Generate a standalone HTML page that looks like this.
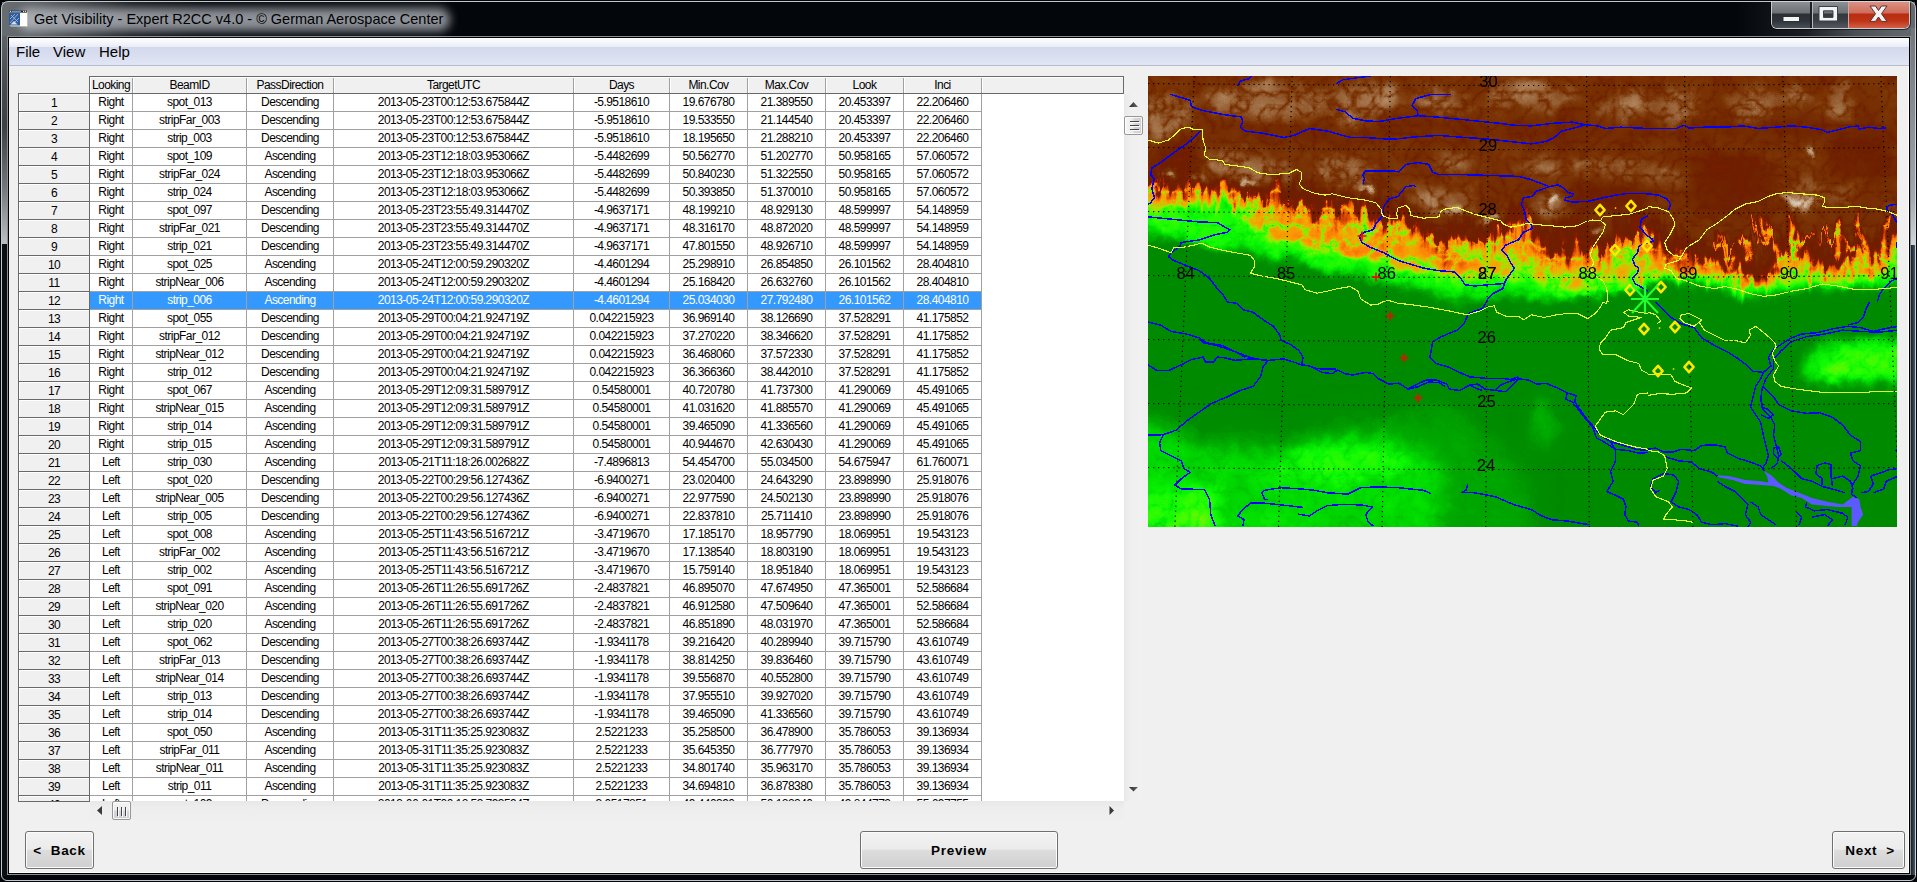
<!DOCTYPE html>
<html lang="en"><head><meta charset="utf-8"><title>Get Visibility - Expert R2CC v4.0</title>
<style>
html,body{margin:0;padding:0;}
body{width:1917px;height:882px;overflow:hidden;background:#000;position:relative;font-family:"Liberation Sans",sans-serif;}
#win{position:absolute;left:0;top:0;width:1917px;height:882px;background:#03070b;overflow:hidden;}
#tbar{position:absolute;left:2px;top:2px;width:260px;height:34px;background:linear-gradient(to right,#686d71 0,#5e6367 30px,#3a3e42 80px,#14181c 130px,rgba(3,7,11,0) 200px);}
#tbarR{position:absolute;left:1735px;top:2px;width:180px;height:34px;background:linear-gradient(to right,rgba(3,7,11,0) 0,#1a1e22 70px,#4a4f54 120px,#5e6368 160px,#6e747a 215px);}
#lf1{position:absolute;left:2px;top:36px;width:5px;height:208px;background:linear-gradient(to bottom,#5e6367 0,#4a4e52 40px,#3c4044 90px,#6f757a 150px,#b8bcbf 205px);}
#lf2{position:absolute;left:2px;top:244px;width:5px;height:632px;background:#0a0f12;}
#rf1{position:absolute;left:1911px;top:28px;width:5px;height:217px;background:linear-gradient(to bottom,#70767c 0,#8c9298 100px,#a2a8ae 170px,#d0d4d8 215px);}
#rf2{position:absolute;left:1911px;top:245px;width:5px;height:630px;background:linear-gradient(to right,#15202a,#566575);}
#edge{position:absolute;left:1px;top:1px;width:1913px;height:878px;border:1px solid rgba(214,219,224,.9);border-radius:7px 7px 6px 6px;}
#inner{position:absolute;left:7px;top:36px;width:1902px;height:837px;border:1px solid #8a8e92;background:#000;}
#inner:after{content:"";position:absolute;left:1px;top:1px;right:1px;bottom:1px;background:#fff;}
#client{position:absolute;left:9px;top:38px;width:1900px;height:835px;background:#f0f0f0;box-shadow:inset -1px -1px 0 #fff;}
#menubar{position:absolute;left:0;top:0;width:1900px;height:28px;background:linear-gradient(to bottom,#ffffff 0px,#f3f5fb 5px,#e8ecf7 9px,#d3d9ec 9px,#d9dfef 18px,#e1e6f6 27px,#b7bdcd 27px,#b7bdcd 28px);}
#menubar span{position:absolute;top:5px;font-size:15px;line-height:18px;color:#000;white-space:nowrap;}
#title{position:absolute;left:34px;top:11px;font-size:14.5px;line-height:17px;color:#000;white-space:nowrap;}
#glow{position:absolute;left:18px;top:8px;width:432px;height:23px;background:rgba(196,200,206,.72);border-radius:11px;filter:blur(5px);}
#appicon{position:absolute;left:9px;top:10px;}
#capbtns{position:absolute;left:1771px;top:1px;width:139px;height:28px;box-sizing:border-box;border:1px solid #c9cdd2;border-top:none;border-radius:0 0 6px 6px;overflow:hidden;background:#222;box-shadow:0 0 0 1px rgba(0,0,0,.6);}
#bmin{position:absolute;left:0;top:0;width:38px;height:27px;background:linear-gradient(to bottom,#8e9398 0,#6c7176 12px,#2b2f34 13px,#30343a 20px,#4a4f56 27px);border-right:1px solid #1c2026;}
#bmax{position:absolute;left:40px;top:0;width:35px;height:27px;background:linear-gradient(to bottom,#8e9398 0,#6c7176 12px,#34383d 13px,#3c4046 20px,#545960 27px);border-left:1px solid #b4b8bc;border-right:1px solid #1c2026;}
#bclose{position:absolute;left:76px;top:0;width:62px;height:27px;background:linear-gradient(to bottom,#dc9488 0,#cf6c5a 12px,#b92c12 13px,#bf3416 20px,#d2604a 27px);border-left:1px solid #d0a8a0;}
#grid{position:absolute;left:18px;top:76px;width:1106px;height:725px;overflow:hidden;font-size:12px;letter-spacing:-0.55px;}
#gwhite{position:absolute;left:72px;top:18px;width:1034px;height:707px;background:#fff;}
#ghead{position:absolute;left:71px;top:0;width:1035px;height:18px;background:#f0f0f0;border:1px solid #696969;box-sizing:border-box;box-shadow:inset 1px 1px 0 #fff;}
.hc{position:absolute;top:1px;height:15px;box-sizing:border-box;border-right:1px solid #a0a0a0;box-shadow:1px 0 0 #fff;text-align:center;line-height:15px;padding-top:0px;white-space:nowrap;}
#gbody{position:absolute;left:0;top:18px;width:1106px;height:707px;overflow:hidden;}
.r{position:absolute;left:0;width:1106px;height:18px;}
.rh{position:absolute;left:0;top:0;width:72px;height:18px;box-sizing:border-box;background:#f0f0f0;border-left:1px solid #696969;border-right:1px solid #696969;border-bottom:1px solid #696969;box-shadow:inset 1px 1px 0 #fff;text-align:center;line-height:18px;}
.c{position:absolute;top:0;height:18px;box-sizing:border-box;border-right:1px solid #a0a0a0;border-bottom:1px solid #a0a0a0;text-align:center;line-height:16px;white-space:nowrap;color:#000;background:#fff;}
.sel .c{background:#3399ff;color:#fff;}
#rhtop{position:absolute;left:18px;top:93px;width:72px;height:1px;background:#696969;}
#rhbot{position:absolute;left:18px;top:801px;width:72px;height:1px;background:#696969;}
#vsb{position:absolute;left:1124px;top:94px;width:19px;height:707px;background:linear-gradient(to right,#e9e9e9,#f0f0f0 40%,#f1f1f1);}
#hsb{position:absolute;left:90px;top:801px;width:1034px;height:19px;background:linear-gradient(to bottom,#e8e8e8,#eeeeee 40%,#efefef);}
.thumb{position:absolute;box-sizing:border-box;border:1px solid #979797;border-radius:2px;box-shadow:inset 0 0 0 1px rgba(255,255,255,.8);}
.thumb i{position:absolute;background:#444;box-shadow:1px 1px 0 rgba(255,255,255,.9);}

.btn{position:absolute;box-sizing:border-box;border:1px solid #707070;border-radius:3px;background:linear-gradient(to bottom,#f2f2f2 0%,#ebebeb 48%,#dddddd 50%,#cfcfcf 100%);box-shadow:inset 0 0 0 1px #fcfcfc;font-weight:bold;font-size:13.5px;letter-spacing:.7px;text-align:center;color:#000;white-space:nowrap;}
#map{position:absolute;left:1148px;top:76px;width:749px;height:451px;overflow:hidden;background:#008800;}

</style></head>
<body>
<div id="win">
<div id="tbar"></div>
<div id="tbarR"></div>
<div id="lf1"></div><div id="lf2"></div>
<div id="rf1"></div><div id="rf2"></div>
<div id="inner"></div>
<div id="glow"></div>
<svg id="appicon" width="20" height="18" viewBox="0 0 20 18">
<rect x="1.5" y="1.5" width="17.5" height="15.5" fill="#d8d4b8" opacity=".55"/>
<rect x="0.5" y="2" width="17.5" height="14" fill="#ffffff" stroke="#2a2a2a" stroke-width="0"/>
<rect x="0.5" y="0.6" width="17.5" height="2" fill="#1c1c1c"/>
<rect x="3" y="0.8" width="9" height="1.2" fill="#5f94dc"/>
<rect x="1" y="0.8" width="1.2" height="1.2" fill="#e8e0b0"/><rect x="14" y="0.8" width="1.2" height="1.2" fill="#e8e0b0"/><rect x="16" y="0.8" width="1.2" height="1.2" fill="#e8e0b0"/>
<rect x="0" y="3" width="11" height="12.5" fill="#2f5c9c"/>
<path d="M1 13 L9 4 M2 5 L9 12 M1 9 L6 4 M4 14 L10 8" stroke="#a9c2e4" stroke-width="1" fill="none" opacity=".8"/>
<path d="M1.5 14.5 L5 11 L8.5 14.5 Z" fill="#e4ecf6" opacity=".9"/>
</svg>
<div id="title">Get Visibility - Expert R2CC v4.0 - © German Aerospace Center</div>
<div id="capbtns">
 <div id="bmin"></div><div id="bmax"></div><div id="bclose"></div>
 <svg width="139" height="28" viewBox="0 1 139 28" style="position:absolute;left:0;top:0">
  <rect x="11" y="16.5" width="16.5" height="5" fill="#f4f4f4" stroke="#2a3038" stroke-width="1"/>
  <path d="M47 6.5 H65.5 V21 H47 Z M51.5 10.8 V17.4 H61 V10.8 Z" fill="#f4f4f4" fill-rule="evenodd" stroke="#3a4048" stroke-width="1"/>
  <path d="M98 6 L103.5 6 L106.5 10.5 L109.5 6 L115 6 L109.5 13.7 L115 21.4 L109.5 21.4 L106.5 17 L103.5 21.4 L98 21.4 L103.5 13.7 Z" fill="#f2f2f2" stroke="#5a3030" stroke-width="1" stroke-linejoin="round"/>
 </svg>
</div>
<div id="edge"></div>
</div>
<div id="client">
<div id="menubar"><span style="left:7px">File</span><span style="left:44px">View</span><span style="left:90px">Help</span></div>
</div>
<div id="grid">
<div id="gwhite"></div>
<div id="ghead"><div class="hc" style="left:0px;width:43px">Looking</div><div class="hc" style="left:43px;width:114px">BeamID</div><div class="hc" style="left:157px;width:87px">PassDirection</div><div class="hc" style="left:244px;width:240px">TargetUTC</div><div class="hc" style="left:484px;width:96px">Days</div><div class="hc" style="left:580px;width:78px">Min.Cov</div><div class="hc" style="left:658px;width:78px">Max.Cov</div><div class="hc" style="left:736px;width:78px">Look</div><div class="hc" style="left:814px;width:78px">Inci</div></div>
<div id="gbody">
<div class="r" style="top:0px"><div class="rh">1</div><div class="c" style="left:72px;width:43px">Right</div><div class="c" style="left:115px;width:114px">spot_013</div><div class="c" style="left:229px;width:87px">Descending</div><div class="c" style="left:316px;width:240px">2013-05-23T00:12:53.675844Z</div><div class="c" style="left:556px;width:96px">-5.9518610</div><div class="c" style="left:652px;width:78px">19.676780</div><div class="c" style="left:730px;width:78px">21.389550</div><div class="c" style="left:808px;width:78px">20.453397</div><div class="c" style="left:886px;width:78px">22.206460</div></div>
<div class="r" style="top:18px"><div class="rh">2</div><div class="c" style="left:72px;width:43px">Right</div><div class="c" style="left:115px;width:114px">stripFar_003</div><div class="c" style="left:229px;width:87px">Descending</div><div class="c" style="left:316px;width:240px">2013-05-23T00:12:53.675844Z</div><div class="c" style="left:556px;width:96px">-5.9518610</div><div class="c" style="left:652px;width:78px">19.533550</div><div class="c" style="left:730px;width:78px">21.144540</div><div class="c" style="left:808px;width:78px">20.453397</div><div class="c" style="left:886px;width:78px">22.206460</div></div>
<div class="r" style="top:36px"><div class="rh">3</div><div class="c" style="left:72px;width:43px">Right</div><div class="c" style="left:115px;width:114px">strip_003</div><div class="c" style="left:229px;width:87px">Descending</div><div class="c" style="left:316px;width:240px">2013-05-23T00:12:53.675844Z</div><div class="c" style="left:556px;width:96px">-5.9518610</div><div class="c" style="left:652px;width:78px">18.195650</div><div class="c" style="left:730px;width:78px">21.288210</div><div class="c" style="left:808px;width:78px">20.453397</div><div class="c" style="left:886px;width:78px">22.206460</div></div>
<div class="r" style="top:54px"><div class="rh">4</div><div class="c" style="left:72px;width:43px">Right</div><div class="c" style="left:115px;width:114px">spot_109</div><div class="c" style="left:229px;width:87px">Ascending</div><div class="c" style="left:316px;width:240px">2013-05-23T12:18:03.953066Z</div><div class="c" style="left:556px;width:96px">-5.4482699</div><div class="c" style="left:652px;width:78px">50.562770</div><div class="c" style="left:730px;width:78px">51.202770</div><div class="c" style="left:808px;width:78px">50.958165</div><div class="c" style="left:886px;width:78px">57.060572</div></div>
<div class="r" style="top:72px"><div class="rh">5</div><div class="c" style="left:72px;width:43px">Right</div><div class="c" style="left:115px;width:114px">stripFar_024</div><div class="c" style="left:229px;width:87px">Ascending</div><div class="c" style="left:316px;width:240px">2013-05-23T12:18:03.953066Z</div><div class="c" style="left:556px;width:96px">-5.4482699</div><div class="c" style="left:652px;width:78px">50.840230</div><div class="c" style="left:730px;width:78px">51.322550</div><div class="c" style="left:808px;width:78px">50.958165</div><div class="c" style="left:886px;width:78px">57.060572</div></div>
<div class="r" style="top:90px"><div class="rh">6</div><div class="c" style="left:72px;width:43px">Right</div><div class="c" style="left:115px;width:114px">strip_024</div><div class="c" style="left:229px;width:87px">Ascending</div><div class="c" style="left:316px;width:240px">2013-05-23T12:18:03.953066Z</div><div class="c" style="left:556px;width:96px">-5.4482699</div><div class="c" style="left:652px;width:78px">50.393850</div><div class="c" style="left:730px;width:78px">51.370010</div><div class="c" style="left:808px;width:78px">50.958165</div><div class="c" style="left:886px;width:78px">57.060572</div></div>
<div class="r" style="top:108px"><div class="rh">7</div><div class="c" style="left:72px;width:43px">Right</div><div class="c" style="left:115px;width:114px">spot_097</div><div class="c" style="left:229px;width:87px">Descending</div><div class="c" style="left:316px;width:240px">2013-05-23T23:55:49.314470Z</div><div class="c" style="left:556px;width:96px">-4.9637171</div><div class="c" style="left:652px;width:78px">48.199210</div><div class="c" style="left:730px;width:78px">48.929130</div><div class="c" style="left:808px;width:78px">48.599997</div><div class="c" style="left:886px;width:78px">54.148959</div></div>
<div class="r" style="top:126px"><div class="rh">8</div><div class="c" style="left:72px;width:43px">Right</div><div class="c" style="left:115px;width:114px">stripFar_021</div><div class="c" style="left:229px;width:87px">Descending</div><div class="c" style="left:316px;width:240px">2013-05-23T23:55:49.314470Z</div><div class="c" style="left:556px;width:96px">-4.9637171</div><div class="c" style="left:652px;width:78px">48.316170</div><div class="c" style="left:730px;width:78px">48.872020</div><div class="c" style="left:808px;width:78px">48.599997</div><div class="c" style="left:886px;width:78px">54.148959</div></div>
<div class="r" style="top:144px"><div class="rh">9</div><div class="c" style="left:72px;width:43px">Right</div><div class="c" style="left:115px;width:114px">strip_021</div><div class="c" style="left:229px;width:87px">Descending</div><div class="c" style="left:316px;width:240px">2013-05-23T23:55:49.314470Z</div><div class="c" style="left:556px;width:96px">-4.9637171</div><div class="c" style="left:652px;width:78px">47.801550</div><div class="c" style="left:730px;width:78px">48.926710</div><div class="c" style="left:808px;width:78px">48.599997</div><div class="c" style="left:886px;width:78px">54.148959</div></div>
<div class="r" style="top:162px"><div class="rh">10</div><div class="c" style="left:72px;width:43px">Right</div><div class="c" style="left:115px;width:114px">spot_025</div><div class="c" style="left:229px;width:87px">Ascending</div><div class="c" style="left:316px;width:240px">2013-05-24T12:00:59.290320Z</div><div class="c" style="left:556px;width:96px">-4.4601294</div><div class="c" style="left:652px;width:78px">25.298910</div><div class="c" style="left:730px;width:78px">26.854850</div><div class="c" style="left:808px;width:78px">26.101562</div><div class="c" style="left:886px;width:78px">28.404810</div></div>
<div class="r" style="top:180px"><div class="rh">11</div><div class="c" style="left:72px;width:43px">Right</div><div class="c" style="left:115px;width:114px">stripNear_006</div><div class="c" style="left:229px;width:87px">Ascending</div><div class="c" style="left:316px;width:240px">2013-05-24T12:00:59.290320Z</div><div class="c" style="left:556px;width:96px">-4.4601294</div><div class="c" style="left:652px;width:78px">25.168420</div><div class="c" style="left:730px;width:78px">26.632760</div><div class="c" style="left:808px;width:78px">26.101562</div><div class="c" style="left:886px;width:78px">28.404810</div></div>
<div class="r sel" style="top:198px"><div class="rh">12</div><div class="c" style="left:72px;width:43px">Right</div><div class="c" style="left:115px;width:114px">strip_006</div><div class="c" style="left:229px;width:87px">Ascending</div><div class="c" style="left:316px;width:240px">2013-05-24T12:00:59.290320Z</div><div class="c" style="left:556px;width:96px">-4.4601294</div><div class="c" style="left:652px;width:78px">25.034030</div><div class="c" style="left:730px;width:78px">27.792480</div><div class="c" style="left:808px;width:78px">26.101562</div><div class="c" style="left:886px;width:78px">28.404810</div></div>
<div class="r" style="top:216px"><div class="rh">13</div><div class="c" style="left:72px;width:43px">Right</div><div class="c" style="left:115px;width:114px">spot_055</div><div class="c" style="left:229px;width:87px">Descending</div><div class="c" style="left:316px;width:240px">2013-05-29T00:04:21.924719Z</div><div class="c" style="left:556px;width:96px">0.042215923</div><div class="c" style="left:652px;width:78px">36.969140</div><div class="c" style="left:730px;width:78px">38.126690</div><div class="c" style="left:808px;width:78px">37.528291</div><div class="c" style="left:886px;width:78px">41.175852</div></div>
<div class="r" style="top:234px"><div class="rh">14</div><div class="c" style="left:72px;width:43px">Right</div><div class="c" style="left:115px;width:114px">stripFar_012</div><div class="c" style="left:229px;width:87px">Descending</div><div class="c" style="left:316px;width:240px">2013-05-29T00:04:21.924719Z</div><div class="c" style="left:556px;width:96px">0.042215923</div><div class="c" style="left:652px;width:78px">37.270220</div><div class="c" style="left:730px;width:78px">38.346620</div><div class="c" style="left:808px;width:78px">37.528291</div><div class="c" style="left:886px;width:78px">41.175852</div></div>
<div class="r" style="top:252px"><div class="rh">15</div><div class="c" style="left:72px;width:43px">Right</div><div class="c" style="left:115px;width:114px">stripNear_012</div><div class="c" style="left:229px;width:87px">Descending</div><div class="c" style="left:316px;width:240px">2013-05-29T00:04:21.924719Z</div><div class="c" style="left:556px;width:96px">0.042215923</div><div class="c" style="left:652px;width:78px">36.468060</div><div class="c" style="left:730px;width:78px">37.572330</div><div class="c" style="left:808px;width:78px">37.528291</div><div class="c" style="left:886px;width:78px">41.175852</div></div>
<div class="r" style="top:270px"><div class="rh">16</div><div class="c" style="left:72px;width:43px">Right</div><div class="c" style="left:115px;width:114px">strip_012</div><div class="c" style="left:229px;width:87px">Descending</div><div class="c" style="left:316px;width:240px">2013-05-29T00:04:21.924719Z</div><div class="c" style="left:556px;width:96px">0.042215923</div><div class="c" style="left:652px;width:78px">36.366360</div><div class="c" style="left:730px;width:78px">38.442010</div><div class="c" style="left:808px;width:78px">37.528291</div><div class="c" style="left:886px;width:78px">41.175852</div></div>
<div class="r" style="top:288px"><div class="rh">17</div><div class="c" style="left:72px;width:43px">Right</div><div class="c" style="left:115px;width:114px">spot_067</div><div class="c" style="left:229px;width:87px">Ascending</div><div class="c" style="left:316px;width:240px">2013-05-29T12:09:31.589791Z</div><div class="c" style="left:556px;width:96px">0.54580001</div><div class="c" style="left:652px;width:78px">40.720780</div><div class="c" style="left:730px;width:78px">41.737300</div><div class="c" style="left:808px;width:78px">41.290069</div><div class="c" style="left:886px;width:78px">45.491065</div></div>
<div class="r" style="top:306px"><div class="rh">18</div><div class="c" style="left:72px;width:43px">Right</div><div class="c" style="left:115px;width:114px">stripNear_015</div><div class="c" style="left:229px;width:87px">Ascending</div><div class="c" style="left:316px;width:240px">2013-05-29T12:09:31.589791Z</div><div class="c" style="left:556px;width:96px">0.54580001</div><div class="c" style="left:652px;width:78px">41.031620</div><div class="c" style="left:730px;width:78px">41.885570</div><div class="c" style="left:808px;width:78px">41.290069</div><div class="c" style="left:886px;width:78px">45.491065</div></div>
<div class="r" style="top:324px"><div class="rh">19</div><div class="c" style="left:72px;width:43px">Right</div><div class="c" style="left:115px;width:114px">strip_014</div><div class="c" style="left:229px;width:87px">Ascending</div><div class="c" style="left:316px;width:240px">2013-05-29T12:09:31.589791Z</div><div class="c" style="left:556px;width:96px">0.54580001</div><div class="c" style="left:652px;width:78px">39.465090</div><div class="c" style="left:730px;width:78px">41.336560</div><div class="c" style="left:808px;width:78px">41.290069</div><div class="c" style="left:886px;width:78px">45.491065</div></div>
<div class="r" style="top:342px"><div class="rh">20</div><div class="c" style="left:72px;width:43px">Right</div><div class="c" style="left:115px;width:114px">strip_015</div><div class="c" style="left:229px;width:87px">Ascending</div><div class="c" style="left:316px;width:240px">2013-05-29T12:09:31.589791Z</div><div class="c" style="left:556px;width:96px">0.54580001</div><div class="c" style="left:652px;width:78px">40.944670</div><div class="c" style="left:730px;width:78px">42.630430</div><div class="c" style="left:808px;width:78px">41.290069</div><div class="c" style="left:886px;width:78px">45.491065</div></div>
<div class="r" style="top:360px"><div class="rh">21</div><div class="c" style="left:72px;width:43px">Left</div><div class="c" style="left:115px;width:114px">strip_030</div><div class="c" style="left:229px;width:87px">Ascending</div><div class="c" style="left:316px;width:240px">2013-05-21T11:18:26.002682Z</div><div class="c" style="left:556px;width:96px">-7.4896813</div><div class="c" style="left:652px;width:78px">54.454700</div><div class="c" style="left:730px;width:78px">55.034500</div><div class="c" style="left:808px;width:78px">54.675947</div><div class="c" style="left:886px;width:78px">61.760071</div></div>
<div class="r" style="top:378px"><div class="rh">22</div><div class="c" style="left:72px;width:43px">Left</div><div class="c" style="left:115px;width:114px">spot_020</div><div class="c" style="left:229px;width:87px">Descending</div><div class="c" style="left:316px;width:240px">2013-05-22T00:29:56.127436Z</div><div class="c" style="left:556px;width:96px">-6.9400271</div><div class="c" style="left:652px;width:78px">23.020400</div><div class="c" style="left:730px;width:78px">24.643290</div><div class="c" style="left:808px;width:78px">23.898990</div><div class="c" style="left:886px;width:78px">25.918076</div></div>
<div class="r" style="top:396px"><div class="rh">23</div><div class="c" style="left:72px;width:43px">Left</div><div class="c" style="left:115px;width:114px">stripNear_005</div><div class="c" style="left:229px;width:87px">Descending</div><div class="c" style="left:316px;width:240px">2013-05-22T00:29:56.127436Z</div><div class="c" style="left:556px;width:96px">-6.9400271</div><div class="c" style="left:652px;width:78px">22.977590</div><div class="c" style="left:730px;width:78px">24.502130</div><div class="c" style="left:808px;width:78px">23.898990</div><div class="c" style="left:886px;width:78px">25.918076</div></div>
<div class="r" style="top:414px"><div class="rh">24</div><div class="c" style="left:72px;width:43px">Left</div><div class="c" style="left:115px;width:114px">strip_005</div><div class="c" style="left:229px;width:87px">Descending</div><div class="c" style="left:316px;width:240px">2013-05-22T00:29:56.127436Z</div><div class="c" style="left:556px;width:96px">-6.9400271</div><div class="c" style="left:652px;width:78px">22.837810</div><div class="c" style="left:730px;width:78px">25.711410</div><div class="c" style="left:808px;width:78px">23.898990</div><div class="c" style="left:886px;width:78px">25.918076</div></div>
<div class="r" style="top:432px"><div class="rh">25</div><div class="c" style="left:72px;width:43px">Left</div><div class="c" style="left:115px;width:114px">spot_008</div><div class="c" style="left:229px;width:87px">Ascending</div><div class="c" style="left:316px;width:240px">2013-05-25T11:43:56.516721Z</div><div class="c" style="left:556px;width:96px">-3.4719670</div><div class="c" style="left:652px;width:78px">17.185170</div><div class="c" style="left:730px;width:78px">18.957790</div><div class="c" style="left:808px;width:78px">18.069951</div><div class="c" style="left:886px;width:78px">19.543123</div></div>
<div class="r" style="top:450px"><div class="rh">26</div><div class="c" style="left:72px;width:43px">Left</div><div class="c" style="left:115px;width:114px">stripFar_002</div><div class="c" style="left:229px;width:87px">Ascending</div><div class="c" style="left:316px;width:240px">2013-05-25T11:43:56.516721Z</div><div class="c" style="left:556px;width:96px">-3.4719670</div><div class="c" style="left:652px;width:78px">17.138540</div><div class="c" style="left:730px;width:78px">18.803190</div><div class="c" style="left:808px;width:78px">18.069951</div><div class="c" style="left:886px;width:78px">19.543123</div></div>
<div class="r" style="top:468px"><div class="rh">27</div><div class="c" style="left:72px;width:43px">Left</div><div class="c" style="left:115px;width:114px">strip_002</div><div class="c" style="left:229px;width:87px">Ascending</div><div class="c" style="left:316px;width:240px">2013-05-25T11:43:56.516721Z</div><div class="c" style="left:556px;width:96px">-3.4719670</div><div class="c" style="left:652px;width:78px">15.759140</div><div class="c" style="left:730px;width:78px">18.951840</div><div class="c" style="left:808px;width:78px">18.069951</div><div class="c" style="left:886px;width:78px">19.543123</div></div>
<div class="r" style="top:486px"><div class="rh">28</div><div class="c" style="left:72px;width:43px">Left</div><div class="c" style="left:115px;width:114px">spot_091</div><div class="c" style="left:229px;width:87px">Ascending</div><div class="c" style="left:316px;width:240px">2013-05-26T11:26:55.691726Z</div><div class="c" style="left:556px;width:96px">-2.4837821</div><div class="c" style="left:652px;width:78px">46.895070</div><div class="c" style="left:730px;width:78px">47.674950</div><div class="c" style="left:808px;width:78px">47.365001</div><div class="c" style="left:886px;width:78px">52.586684</div></div>
<div class="r" style="top:504px"><div class="rh">29</div><div class="c" style="left:72px;width:43px">Left</div><div class="c" style="left:115px;width:114px">stripNear_020</div><div class="c" style="left:229px;width:87px">Ascending</div><div class="c" style="left:316px;width:240px">2013-05-26T11:26:55.691726Z</div><div class="c" style="left:556px;width:96px">-2.4837821</div><div class="c" style="left:652px;width:78px">46.912580</div><div class="c" style="left:730px;width:78px">47.509640</div><div class="c" style="left:808px;width:78px">47.365001</div><div class="c" style="left:886px;width:78px">52.586684</div></div>
<div class="r" style="top:522px"><div class="rh">30</div><div class="c" style="left:72px;width:43px">Left</div><div class="c" style="left:115px;width:114px">strip_020</div><div class="c" style="left:229px;width:87px">Ascending</div><div class="c" style="left:316px;width:240px">2013-05-26T11:26:55.691726Z</div><div class="c" style="left:556px;width:96px">-2.4837821</div><div class="c" style="left:652px;width:78px">46.851890</div><div class="c" style="left:730px;width:78px">48.031970</div><div class="c" style="left:808px;width:78px">47.365001</div><div class="c" style="left:886px;width:78px">52.586684</div></div>
<div class="r" style="top:540px"><div class="rh">31</div><div class="c" style="left:72px;width:43px">Left</div><div class="c" style="left:115px;width:114px">spot_062</div><div class="c" style="left:229px;width:87px">Descending</div><div class="c" style="left:316px;width:240px">2013-05-27T00:38:26.693744Z</div><div class="c" style="left:556px;width:96px">-1.9341178</div><div class="c" style="left:652px;width:78px">39.216420</div><div class="c" style="left:730px;width:78px">40.289940</div><div class="c" style="left:808px;width:78px">39.715790</div><div class="c" style="left:886px;width:78px">43.610749</div></div>
<div class="r" style="top:558px"><div class="rh">32</div><div class="c" style="left:72px;width:43px">Left</div><div class="c" style="left:115px;width:114px">stripFar_013</div><div class="c" style="left:229px;width:87px">Descending</div><div class="c" style="left:316px;width:240px">2013-05-27T00:38:26.693744Z</div><div class="c" style="left:556px;width:96px">-1.9341178</div><div class="c" style="left:652px;width:78px">38.814250</div><div class="c" style="left:730px;width:78px">39.836460</div><div class="c" style="left:808px;width:78px">39.715790</div><div class="c" style="left:886px;width:78px">43.610749</div></div>
<div class="r" style="top:576px"><div class="rh">33</div><div class="c" style="left:72px;width:43px">Left</div><div class="c" style="left:115px;width:114px">stripNear_014</div><div class="c" style="left:229px;width:87px">Descending</div><div class="c" style="left:316px;width:240px">2013-05-27T00:38:26.693744Z</div><div class="c" style="left:556px;width:96px">-1.9341178</div><div class="c" style="left:652px;width:78px">39.556870</div><div class="c" style="left:730px;width:78px">40.552800</div><div class="c" style="left:808px;width:78px">39.715790</div><div class="c" style="left:886px;width:78px">43.610749</div></div>
<div class="r" style="top:594px"><div class="rh">34</div><div class="c" style="left:72px;width:43px">Left</div><div class="c" style="left:115px;width:114px">strip_013</div><div class="c" style="left:229px;width:87px">Descending</div><div class="c" style="left:316px;width:240px">2013-05-27T00:38:26.693744Z</div><div class="c" style="left:556px;width:96px">-1.9341178</div><div class="c" style="left:652px;width:78px">37.955510</div><div class="c" style="left:730px;width:78px">39.927020</div><div class="c" style="left:808px;width:78px">39.715790</div><div class="c" style="left:886px;width:78px">43.610749</div></div>
<div class="r" style="top:612px"><div class="rh">35</div><div class="c" style="left:72px;width:43px">Left</div><div class="c" style="left:115px;width:114px">strip_014</div><div class="c" style="left:229px;width:87px">Descending</div><div class="c" style="left:316px;width:240px">2013-05-27T00:38:26.693744Z</div><div class="c" style="left:556px;width:96px">-1.9341178</div><div class="c" style="left:652px;width:78px">39.465090</div><div class="c" style="left:730px;width:78px">41.336560</div><div class="c" style="left:808px;width:78px">39.715790</div><div class="c" style="left:886px;width:78px">43.610749</div></div>
<div class="r" style="top:630px"><div class="rh">36</div><div class="c" style="left:72px;width:43px">Left</div><div class="c" style="left:115px;width:114px">spot_050</div><div class="c" style="left:229px;width:87px">Ascending</div><div class="c" style="left:316px;width:240px">2013-05-31T11:35:25.923083Z</div><div class="c" style="left:556px;width:96px">2.5221233</div><div class="c" style="left:652px;width:78px">35.258500</div><div class="c" style="left:730px;width:78px">36.478900</div><div class="c" style="left:808px;width:78px">35.786053</div><div class="c" style="left:886px;width:78px">39.136934</div></div>
<div class="r" style="top:648px"><div class="rh">37</div><div class="c" style="left:72px;width:43px">Left</div><div class="c" style="left:115px;width:114px">stripFar_011</div><div class="c" style="left:229px;width:87px">Ascending</div><div class="c" style="left:316px;width:240px">2013-05-31T11:35:25.923083Z</div><div class="c" style="left:556px;width:96px">2.5221233</div><div class="c" style="left:652px;width:78px">35.645350</div><div class="c" style="left:730px;width:78px">36.777970</div><div class="c" style="left:808px;width:78px">35.786053</div><div class="c" style="left:886px;width:78px">39.136934</div></div>
<div class="r" style="top:666px"><div class="rh">38</div><div class="c" style="left:72px;width:43px">Left</div><div class="c" style="left:115px;width:114px">stripNear_011</div><div class="c" style="left:229px;width:87px">Ascending</div><div class="c" style="left:316px;width:240px">2013-05-31T11:35:25.923083Z</div><div class="c" style="left:556px;width:96px">2.5221233</div><div class="c" style="left:652px;width:78px">34.801740</div><div class="c" style="left:730px;width:78px">35.963170</div><div class="c" style="left:808px;width:78px">35.786053</div><div class="c" style="left:886px;width:78px">39.136934</div></div>
<div class="r" style="top:684px"><div class="rh">39</div><div class="c" style="left:72px;width:43px">Left</div><div class="c" style="left:115px;width:114px">strip_011</div><div class="c" style="left:229px;width:87px">Ascending</div><div class="c" style="left:316px;width:240px">2013-05-31T11:35:25.923083Z</div><div class="c" style="left:556px;width:96px">2.5221233</div><div class="c" style="left:652px;width:78px">34.694810</div><div class="c" style="left:730px;width:78px">36.878380</div><div class="c" style="left:808px;width:78px">35.786053</div><div class="c" style="left:886px;width:78px">39.136934</div></div>
<div class="r" style="top:702px"><div class="rh">40</div><div class="c" style="left:72px;width:43px">Left</div><div class="c" style="left:115px;width:114px">spot_109</div><div class="c" style="left:229px;width:87px">Descending</div><div class="c" style="left:316px;width:240px">2013-06-01T00:12:53.793594Z</div><div class="c" style="left:556px;width:96px">3.0517851</div><div class="c" style="left:652px;width:78px">49.440390</div><div class="c" style="left:730px;width:78px">50.122240</div><div class="c" style="left:808px;width:78px">49.844772</div><div class="c" style="left:886px;width:78px">55.697755</div></div>
</div>
</div>
<div id="rhtop"></div>
<div id="rhbot"></div>
<div id="vsb">
 <svg width="19" height="707" viewBox="0 0 19 707" style="position:absolute;left:0;top:0">
  <defs><linearGradient id="ag" x1="0" y1="0" x2="1" y2="0"><stop offset="0" stop-color="#2a2a2a"/><stop offset="1" stop-color="#6a6a6a"/></linearGradient></defs>
  <path d="M9.5 8 L14 13 L5 13 Z" fill="url(#ag)"/>
  <path d="M5 693 L14 693 L9.5 697.5 Z" fill="url(#ag)"/>
 </svg>
 <div class="thumb" style="left:0;top:22px;width:19px;height:19px;background:linear-gradient(to right,#f6f6f6 0,#ececec 45%,#d6d6da 55%,#cfcfd3 100%);">
  <i style="left:5px;top:4px;width:9px;height:1px"></i><i style="left:5px;top:8px;width:9px;height:1px"></i><i style="left:5px;top:12px;width:9px;height:1px"></i>
 </div>
</div>
<div id="hsb">
 <svg width="1034" height="19" viewBox="0 0 1034 19" style="position:absolute;left:0;top:0">
  <path d="M7 9.5 L12 5 L12 14 Z" fill="#3a3a3a"/>
  <path d="M1024 9.5 L1019.5 5 L1019.5 14 Z" fill="#3a3a3a"/>
 </svg>
 <div class="thumb" style="left:22px;top:0;width:19px;height:19px;background:linear-gradient(to bottom,#f6f6f6 0,#ececec 45%,#d6d6da 55%,#cfcfd3 100%);">
  <i style="left:4px;top:5px;width:1px;height:9px"></i><i style="left:8px;top:5px;width:1px;height:9px"></i><i style="left:12px;top:5px;width:1px;height:9px"></i>
 </div>
</div>
<div class="btn" style="left:25px;top:831px;width:69px;height:38px;line-height:37px;">&lt;&nbsp; Back</div>
<div class="btn" style="left:860px;top:831px;width:198px;height:38px;line-height:37px;">Preview</div>
<div class="btn" style="left:1832px;top:831px;width:73px;height:38px;line-height:37px;padding-left:3px;">Next &nbsp;&gt;</div>
<div id="map">
<svg width="749" height="451" viewBox="0 0 749 451" style="display:block">
<defs>
<filter id="b1_5" x="-30%" y="-30%" width="160%" height="160%" color-interpolation-filters="sRGB"><feGaussianBlur stdDeviation="1.5"/></filter>
<filter id="b2_5" x="-30%" y="-30%" width="160%" height="160%" color-interpolation-filters="sRGB"><feGaussianBlur stdDeviation="2.5"/></filter>
<filter id="b4" x="-30%" y="-30%" width="160%" height="160%" color-interpolation-filters="sRGB"><feGaussianBlur stdDeviation="4"/></filter>
<filter id="b6" x="-30%" y="-30%" width="160%" height="160%" color-interpolation-filters="sRGB"><feGaussianBlur stdDeviation="6"/></filter>
<filter id="b9" x="-30%" y="-30%" width="160%" height="160%" color-interpolation-filters="sRGB"><feGaussianBlur stdDeviation="9"/></filter>
<filter id="b14" x="-30%" y="-30%" width="160%" height="160%" color-interpolation-filters="sRGB"><feGaussianBlur stdDeviation="14"/></filter>
<filter id="b20" x="-30%" y="-30%" width="160%" height="160%" color-interpolation-filters="sRGB"><feGaussianBlur stdDeviation="20"/></filter>
<filter id="cmap" x="0" y="0" width="100%" height="100%" filterUnits="objectBoundingBox" color-interpolation-filters="sRGB">
<feTurbulence type="fractalNoise" baseFrequency="0.03" numOctaves="5" seed="7" result="n0"/>
<feColorMatrix in="n0" type="matrix" values="1 0 0 0 0  1 0 0 0 0  1 0 0 0 0  0 0 0 0 1" result="n1"/>
<feTurbulence type="turbulence" baseFrequency="0.06" numOctaves="5" seed="3" result="t0"/>
<feColorMatrix in="t0" type="matrix" values="0 1 0 0 0  0 1 0 0 0  0 1 0 0 0  0 0 0 0 1" result="t1"/>
<feComponentTransfer in="t1" result="t2">
<feFuncR type="table" tableValues="0 0.38 0.64 0.82 0.93 1 1 1 1 1 1"/><feFuncG type="table" tableValues="0 0.38 0.64 0.82 0.93 1 1 1 1 1 1"/><feFuncB type="table" tableValues="0 0.38 0.64 0.82 0.93 1 1 1 1 1 1"/>
</feComponentTransfer>
<feOffset in="SourceGraphic" dx="0" dy="0" result="sd"/>
<feComponentTransfer in="sd" result="a1">
<feFuncR type="table" tableValues="0.000 0.000 0.010 0.030 0.060 0.120 0.200 0.240 0.260 0.260 0.220 0.060 0.040 0.100 0.160 0.180 0.180 0.160 0.150 0.100 0.050"/><feFuncG type="table" tableValues="0.000 0.000 0.010 0.030 0.060 0.120 0.200 0.240 0.260 0.260 0.220 0.060 0.040 0.100 0.160 0.180 0.180 0.160 0.150 0.100 0.050"/><feFuncB type="table" tableValues="0.000 0.000 0.010 0.030 0.060 0.120 0.200 0.240 0.260 0.260 0.220 0.060 0.040 0.100 0.160 0.180 0.180 0.160 0.150 0.100 0.050"/>
</feComponentTransfer>
<feComponentTransfer in="sd" result="a2">
<feFuncR type="table" tableValues="0.000 0.010 0.040 0.060 0.080 0.140 0.200 0.220 0.220 0.200 0.160 0.080 0.060 0.100 0.120 0.120 0.100 0.100 0.100 0.100 0.100"/><feFuncG type="table" tableValues="0.000 0.010 0.040 0.060 0.080 0.140 0.200 0.220 0.220 0.200 0.160 0.080 0.060 0.100 0.120 0.120 0.100 0.100 0.100 0.100 0.100"/><feFuncB type="table" tableValues="0.000 0.010 0.040 0.060 0.080 0.140 0.200 0.220 0.220 0.200 0.160 0.080 0.060 0.100 0.120 0.120 0.100 0.100 0.100 0.100 0.100"/>
</feComponentTransfer>
<feComponentTransfer in="sd" result="f0">
<feFuncR type="table" tableValues="0.000 0.045 0.075 0.104 0.129 0.118 0.096 0.115 0.155 0.215 0.306 0.479 0.549 0.548 0.557 0.596 0.656 0.717 0.772 0.848 0.924"/><feFuncG type="table" tableValues="0.000 0.045 0.075 0.104 0.129 0.118 0.096 0.115 0.155 0.215 0.306 0.479 0.549 0.548 0.557 0.596 0.656 0.717 0.772 0.848 0.924"/><feFuncB type="table" tableValues="0.000 0.045 0.075 0.104 0.129 0.118 0.096 0.115 0.155 0.215 0.306 0.479 0.549 0.548 0.557 0.596 0.656 0.717 0.772 0.848 0.924"/>
</feComponentTransfer>
<feComposite in="a1" in2="t2" operator="arithmetic" k1="1" k2="0" k3="0" k4="0" result="p1"/>
<feComposite in="a2" in2="n1" operator="arithmetic" k1="1" k2="0" k3="0" k4="0" result="p2"/>
<feComposite in="f0" in2="p1" operator="arithmetic" k1="0" k2="1" k3="1" k4="0" result="h1"/>
<feComposite in="h1" in2="p2" operator="arithmetic" k1="0" k2="1" k3="1" k4="0" result="h2"/>
<feComponentTransfer in="h2">
<feFuncR type="table" tableValues="0.000 0.000 0.000 0.000 0.055 0.275 0.627 0.941 1.000 0.886 0.690 0.518 0.431 0.455 0.486 0.549 0.651 0.753 0.847 0.925 0.980"/>
<feFuncG type="table" tableValues="0.525 0.557 0.675 0.847 0.980 0.988 0.910 0.675 0.533 0.337 0.173 0.110 0.118 0.165 0.212 0.314 0.463 0.620 0.776 0.902 0.980"/>
<feFuncB type="table" tableValues="0.000 0.000 0.000 0.000 0.016 0.000 0.000 0.000 0.031 0.000 0.000 0.000 0.000 0.000 0.024 0.141 0.306 0.486 0.698 0.871 0.980"/>
</feComponentTransfer>
</filter>
<filter id="dispA" filterUnits="userSpaceOnUse" x="-40" y="-40" width="829" height="531" color-interpolation-filters="sRGB">
<feTurbulence type="fractalNoise" baseFrequency="0.018" numOctaves="4" seed="11" result="d0"/>
<feDisplacementMap in="SourceGraphic" in2="d0" scale="24" xChannelSelector="R" yChannelSelector="G" result="s0"/>
<feTurbulence type="fractalNoise" baseFrequency="0.07" numOctaves="3" seed="23" result="d1"/>
<feDisplacementMap in="s0" in2="d1" scale="10" xChannelSelector="G" yChannelSelector="R"/>
</filter>
<filter id="dispB" filterUnits="userSpaceOnUse" x="-40" y="-40" width="829" height="531" color-interpolation-filters="sRGB">
<feTurbulence type="fractalNoise" baseFrequency="0.02" numOctaves="3" seed="11" result="d0"/>
<feDisplacementMap in="SourceGraphic" in2="d0" scale="18" xChannelSelector="R" yChannelSelector="G" result="s0"/>
<feTurbulence type="fractalNoise" baseFrequency="0.15 0.025" numOctaves="3" seed="5" result="d1"/>
<feColorMatrix in="d1" type="matrix" values="0 0 0 0 0.5  0 1 0 0 0  0 0 1 0 0  0 0 0 0 1" result="d2"/>
<feDisplacementMap in="s0" in2="d2" scale="40" xChannelSelector="R" yChannelSelector="G"/>
</filter>
</defs>
<g filter="url(#cmap)">
<rect x="-40" y="-40" width="829" height="531" fill="#080808"/>
<g filter="url(#dispA)">
<g filter="url(#b14)">
<polygon fill="#171717" points="-40,335 38,338 60,356 128,362 154,348 250,336 290,318 330,350 380,382 395,500 -40,500"/>
</g>
<g filter="url(#b9)">
<polygon fill="#262626" points="-40,345 30,350 50,372 120,378 160,362 250,352 280,372 300,420 280,500 -40,500"/>
<polygon fill="#333333" points="128,372 250,366 262,392 200,408 130,400"/>
<polygon fill="#363636" points="-40,420 70,418 80,500 -40,500"/>
<ellipse cx="397" cy="346" rx="16" ry="30" fill="#1c1c1c"/>
</g>
<g filter="url(#b6)">
<polygon fill="#292929" points="650,290 665,268 700,258 760,256 760,318 700,316 660,306"/>
<polygon fill="#343434" points="668,292 690,272 760,268 760,308 700,306"/>
<ellipse cx="686" cy="298" rx="11" ry="3" fill="#4f4f4f"/>
</g>
<g filter="url(#b6)"><polygon fill="#333333" points="-30,158 0,158 16,164 32,168 48,172 71,173 95,176 119,180 143,184 167,189 190,195 206,199 222,203 238,208 254,211 270,215 285,218 301,221 317,223 349,224 380,225 412,223 443,221 455,220 461,212 490,210 523,208 539,210 560,212 576,213 592,216 608,219 624,220 640,218 656,215 671,208 687,210 703,213 719,213 749,211 779,211 779,-30 -30,-30"/></g>
<g filter="url(#b4)"><polygon fill="#454545" points="-30,134 0,134 16,130 32,126 48,124 64,123 80,124 95,127 100,148 111,157 127,162 143,170 159,173 190,175 206,177 222,183 238,188 254,191 270,196 285,200 301,205 317,208 349,208 380,211 412,213 443,213 459,211 475,205 507,203 523,199 539,200 560,199 576,203 592,208 608,213 624,214 640,210 656,205 671,203 687,205 703,207 719,205 735,203 749,203 779,203 779,-30 -30,-30"/></g>
<g filter="url(#b4)"><polygon fill="#505050" points="95,138 130,136 160,143 200,148 250,158 290,176 330,183 330,200 290,196 250,186 200,176 160,170 130,160 100,150"/></g>
</g>
<g filter="url(#dispB)">
<g filter="url(#b6)"><polygon fill="#5e5e5e" points="-30,116 0,116 8,119 16,120 24,118 32,117 40,119 48,121 56,121 64,122 72,120 80,119 89,127 103,130 119,131 127,125 130,120 135,135 151,139 167,143 190,146 206,147 222,151 238,152 254,157 262,154 273,166 285,177 301,179 317,173 333,182 341,174 349,166 365,163 380,159 388,171 396,178 412,176 428,178 443,179 459,185 469,178 475,170 491,171 507,173 515,182 523,192 539,193 555,198 560,198 576,201 592,206 608,211 620,205 627,192 639,185 655,192 671,200 684,198 695,189 711,192 727,193 735,189 749,167 779,167 779,-30 -30,-30"/></g>
<g filter="url(#b2_5)"><polygon fill="#959595" points="-30,106 0,106 8,109 16,110 24,108 32,107 40,109 48,111 56,111 64,112 72,110 80,109 89,117 103,120 119,121 127,115 130,110 135,125 151,129 167,133 190,136 206,137 222,141 238,142 254,147 262,144 273,156 285,167 301,169 317,163 333,172 341,164 349,156 365,153 380,149 388,161 396,168 412,166 428,168 443,169 459,175 469,168 475,160 491,161 507,163 515,172 523,182 539,183 555,188 560,188 576,191 592,196 608,201 620,195 627,182 639,175 655,182 671,190 684,188 695,179 711,182 727,183 735,179 749,157 779,157 779,-30 -30,-30"/></g>
<g filter="url(#b6)"><polygon fill="#a4a4a4" points="-30,87 0,87 8,90 16,91 24,89 32,88 40,90 48,92 56,92 64,93 72,91 80,90 89,98 103,101 119,102 127,96 130,91 135,106 151,110 167,114 190,117 206,118 222,122 238,123 254,128 262,125 273,137 285,148 301,150 317,144 333,153 341,145 349,137 365,134 380,130 388,142 396,149 412,147 428,149 443,150 459,156 469,149 475,141 491,142 507,144 515,153 523,163 539,164 555,169 560,169 576,172 592,177 608,182 620,176 627,163 639,156 655,163 671,171 684,169 695,160 711,163 727,164 735,160 749,138 779,138 779,-30 -30,-30"/></g>
<g filter="url(#b1_5)">
<polyline fill="none" stroke="#4f4f4f" stroke-width="5.5" stroke-linecap="round" stroke-linejoin="round" points="630,186 623.5,168.6 615.5,154.3 612.4,141.6"/>
<polyline fill="none" stroke="#4f4f4f" stroke-width="5.5" stroke-linecap="round" stroke-linejoin="round" points="623.5,168.6 607.6,162 604.4,154"/>
<polyline fill="none" stroke="#4f4f4f" stroke-width="5.5" stroke-linecap="round" stroke-linejoin="round" points="636,186 645.7,176.5 655,165 661.6,157.5"/>
<polyline fill="none" stroke="#4f4f4f" stroke-width="5.5" stroke-linecap="round" stroke-linejoin="round" points="645.7,176.5 642.5,146"/>
<polyline fill="none" stroke="#4f4f4f" stroke-width="5.5" stroke-linecap="round" stroke-linejoin="round" points="687,176 688.6,162 690,151"/>
<polyline fill="none" stroke="#4f4f4f" stroke-width="5.5" stroke-linecap="round" stroke-linejoin="round" points="688.6,162 680.6,160.7 671,164"/>
<polyline fill="none" stroke="#4f4f4f" stroke-width="5.5" stroke-linecap="round" stroke-linejoin="round" points="718.7,180 715.5,165 710.8,154"/>
<polyline fill="none" stroke="#4f4f4f" stroke-width="5.5" stroke-linecap="round" stroke-linejoin="round" points="715.5,165 702.8,170 696.5,167"/>
<polyline fill="none" stroke="#4f4f4f" stroke-width="5.5" stroke-linecap="round" stroke-linejoin="round" points="734.6,184 737.8,160.7 742.5,141.6"/>
<polyline fill="none" stroke="#4f4f4f" stroke-width="5.5" stroke-linecap="round" stroke-linejoin="round" points="583.8,172 569.5,160.7"/>
<polyline fill="none" stroke="#4f4f4f" stroke-width="5.5" stroke-linecap="round" stroke-linejoin="round" points="599.7,186 596.5,171.8 591.7,162"/>
<polyline fill="none" stroke="#4f4f4f" stroke-width="5.5" stroke-linecap="round" stroke-linejoin="round" points="583.8,192 579,176.5 566,168.6"/>
<polyline fill="none" stroke="#4f4f4f" stroke-width="5.5" stroke-linecap="round" stroke-linejoin="round" points="375,178 378,160 382,148 380,138"/>
<polyline fill="none" stroke="#4f4f4f" stroke-width="5.5" stroke-linecap="round" stroke-linejoin="round" points="491,204 494,178 500,164 497,150"/>
<polyline fill="none" stroke="#4f4f4f" stroke-width="5.5" stroke-linecap="round" stroke-linejoin="round" points="128,118 131,100"/>
<polyline fill="none" stroke="#4f4f4f" stroke-width="5.5" stroke-linecap="round" stroke-linejoin="round" points="3,110 18,92 34,72"/>
</g>
</g>
<g filter="url(#dispA)">
<g filter="url(#b6)">
<ellipse cx="27" cy="80" rx="27" ry="20" fill="#999999"/>
<ellipse cx="457" cy="122" rx="40" ry="16" fill="#999999"/>
<ellipse cx="585" cy="107" rx="46" ry="30" fill="#999999"/>
<ellipse cx="714" cy="80" rx="35" ry="28" fill="#999999"/>
<polyline fill="none" stroke="#9f9f9f" stroke-width="16" points="40,22 95,40 140,56 250,56 330,50 420,56 520,52 620,52 700,56 760,52"/>
<ellipse cx="20" cy="40" rx="25" ry="22" fill="#b6b6b6"/>
<ellipse cx="120" cy="25" rx="70" ry="18" fill="#b6b6b6"/>
<ellipse cx="215" cy="28" rx="40" ry="22" fill="#b6b6b6"/>
<ellipse cx="100" cy="90" rx="45" ry="16" fill="#b6b6b6"/>
<ellipse cx="197" cy="96" rx="33" ry="20" fill="#b6b6b6"/>
<ellipse cx="300" cy="28" rx="35" ry="12" fill="#b6b6b6"/>
<ellipse cx="385" cy="22" rx="45" ry="14" fill="#b6b6b6"/>
<ellipse cx="475" cy="27" rx="25" ry="14" fill="#b6b6b6"/>
<ellipse cx="305" cy="85" rx="22" ry="9" fill="#b6b6b6"/>
<ellipse cx="391" cy="92" rx="28" ry="10" fill="#b6b6b6"/>
<ellipse cx="462" cy="90" rx="38" ry="11" fill="#b6b6b6"/>
<ellipse cx="300" cy="120" rx="35" ry="14" fill="#b6b6b6"/>
<ellipse cx="401" cy="128" rx="18" ry="15" fill="#b6b6b6"/>
<ellipse cx="525" cy="30" rx="26" ry="16" fill="#b6b6b6"/>
<ellipse cx="605" cy="28" rx="28" ry="15" fill="#b6b6b6"/>
<ellipse cx="650" cy="20" rx="14" ry="12" fill="#b6b6b6"/>
<ellipse cx="692" cy="28" rx="13" ry="18" fill="#b6b6b6"/>
<ellipse cx="518" cy="102" rx="18" ry="10" fill="#b6b6b6"/>
<ellipse cx="660" cy="78" rx="9" ry="7" fill="#b6b6b6"/>
<ellipse cx="656" cy="115" rx="23" ry="13" fill="#b6b6b6"/>
<ellipse cx="696" cy="120" rx="17" ry="8" fill="#b6b6b6"/>
</g>
<g filter="url(#b2_5)">
<ellipse cx="25" cy="96" rx="9" ry="2.5" fill="#dedede"/>
<ellipse cx="52" cy="103" rx="7" ry="2" fill="#dedede"/>
<ellipse cx="103" cy="106" rx="10" ry="3" fill="#dedede"/>
<ellipse cx="217" cy="114" rx="7" ry="3" fill="#dedede"/>
<ellipse cx="311" cy="129" rx="10" ry="2.5" fill="#dedede"/>
<ellipse cx="343" cy="141" rx="9" ry="2.5" fill="#dedede"/>
<ellipse cx="406" cy="122" rx="4" ry="6" fill="#dedede"/>
<ellipse cx="447" cy="156" rx="4" ry="2" fill="#dedede"/>
<ellipse cx="652" cy="123" rx="20" ry="3" fill="#dedede"/>
<ellipse cx="661" cy="79" rx="5" ry="3" fill="#dedede"/>
</g>
</g>
</g>
<g fill="#5a5aff" stroke="none">
<polygon points="567.9,398.9 582.0,400.2 597.3,404.0 612.7,405.3 620.4,406.6 619.1,400.2 615.8,395.1 623.0,398.9 630.6,406.6 638.3,411.7 651.1,416.8 663.9,422.0 679.3,425.8 694.7,428.4 704.9,420.7 711.3,423.2 712.6,430.9 715.2,438.6 710.0,446.3 708.8,450.1 703.6,450.1 703.6,430.9 689.5,430.9 674.2,429.6 663.9,428.4 653.7,422.0 643.4,419.4 633.2,413.0 625.5,409.9 612.7,409.1 597.3,407.9 584.5,404.0 571.7,401.5"/>
</g>
<g fill="none" stroke="#0000ff" stroke-width="1.5" stroke-linejoin="round" shape-rendering="crispEdges">
<polyline points="89.7,10.2 92.2,5.1 101.2,2.6 103.7,0.0"/>
<polyline points="188.3,7.7 194.7,3.8 212.6,1.3 222.8,0.0"/>
<polyline points="22.5,18.4 42.3,24.3 43.5,30.7 55.1,34.6 74.3,38.4 93.5,41.0 94.8,46.1 92.2,51.2 97.3,55.1 112.7,56.9 135.8,61.5 146.0,59.4 161.4,52.5 179.3,55.1 202.4,61.5 217.7,61.5 235.7,62.8 250.0,63.3"/>
<polyline points="188.3,33.3 197.2,35.9 204.9,42.3 217.7,44.8 230.5,45.6 250.0,42.3"/>
<polyline points="52.5,55.1 46.1,61.5 38.4,67.9 25.6,76.8 15.4,84.5 3.8,92.2 2.6,98.6 6.4,102.5 3.8,112.7 6.4,121.7 2.6,126.8 0.0,128.1"/>
<polyline points="250.0,95.3 217.7,94.8 214.7,98.6 216.4,102.5 215.2,107.6"/>
<polyline points="250.0,120.4 240.8,123.0 235.7,130.6 235.1,139.6 228.0,147.3 225.4,153.7 216.4,156.2 211.3,160.1 213.9,166.5 222.8,171.6 235.7,176.7 250.0,184.4"/>
<polyline points="0.0,140.9 25.6,143.4 51.2,146.0 69.2,146.5 76.8,151.1 82.0,153.7 79.4,156.2 66.6,158.8 51.2,163.9 33.3,166.5 32.0,170.3 23.1,176.7 20.5,180.6 25.6,184.4 38.4,189.5 51.2,194.7 61.5,202.4 69.2,212.6 74.3,217.7 79.4,225.9"/>
<polyline points="302.5,18.4 283.3,18.4 267.9,22.5 264.1,29.5 269.2,34.6 270.0,39.7 250.0,42.3"/>
<polyline points="270.0,39.7 288.4,41.0 314.0,43.5 334.5,45.6 352.5,47.4 365.3,49.2 383.2,49.9 403.7,47.4 424.2,46.1 437.0,48.7 449.8,49.9 457.5,52.5 472.8,51.2 500.0,52.5"/>
<polyline points="250.0,62.8 265.4,61.0 291.0,59.4 316.6,61.5 337.1,62.8 360.1,65.3 383.2,67.9 398.6,65.3 406.2,61.5 413.9,55.1 429.3,51.2 437.0,48.7"/>
<polyline points="250.0,96.1 257.7,88.4 270.5,86.6 280.7,88.4 284.6,96.1 291.0,98.6 314.0,98.6 339.7,99.4 370.4,100.4 383.2,103.7 393.4,107.6 401.1,110.7"/>
<polyline points="250.0,120.4 257.7,110.7 265.4,109.6 268.4,110.7"/>
<polyline points="401.1,110.7 410.1,108.9 416.5,112.7 420.3,116.5 425.5,117.8 424.2,120.4 417.8,121.7 416.5,124.2 424.2,126.0 439.5,125.5 454.9,121.7 467.7,119.1 480.5,117.3 500.0,117.8"/>
<polyline points="401.1,110.7 388.3,115.3 384.5,120.4 375.5,121.7 373.5,128.1 376.8,135.8 378.1,143.4 383.2,148.6 384.5,152.4 375.5,156.2 370.4,163.9 357.6,169.1 353.7,174.2 358.9,179.3 362.7,187.0 366.5,192.1 362.7,197.2 358.9,202.4 356.3,207.5 355.0,212.6 344.8,217.7 339.7,222.8 338.4,225.9"/>
<polyline points="250.0,184.4 262.8,188.3 275.6,192.1 291.0,194.7 306.4,196.0 312.8,202.4 317.1,208.8 326.8,210.0 339.7,208.8 356.3,207.5"/>
<polyline points="500.0,139.6 493.3,143.4 492.1,151.1 495.9,156.2 500.0,160.1"/>
<polyline points="500.0,166.5 490.8,170.3 489.5,176.7 484.4,183.1 486.9,189.5 490.8,192.1 489.5,197.2 484.4,202.4 486.9,207.5 495.9,212.6 500.0,215.2"/>
<polyline points="500.0,52.5 515.4,52.5 528.2,52.5 535.9,49.2 541.0,52.0 556.4,51.2 576.8,51.2 594.8,49.9 610.1,52.5 628.1,51.2 643.4,49.9 658.8,51.2 674.2,53.8 679.3,56.4 689.5,53.8 702.4,50.7 710.0,49.9 711.3,53.0 720.3,51.2 730.5,52.5 738.2,51.7"/>
<polyline points="500.0,117.8 510.2,119.1 519.2,123.0 522.5,128.1 520.5,134.5"/>
<polyline points="750.0,128.1 740.8,129.4 738.2,133.2 743.3,137.0 747.2,143.4 750.0,148.6"/>
<polyline points="750.0,163.9 748.5,169.1 750.0,174.2"/>
<polyline points="750.0,202.4 743.3,204.9 735.7,212.6 731.8,217.7 729.3,225.9"/>
<polyline points="500.0,160.1 503.8,162.7 505.1,165.2 501.3,166.5"/>
<polyline points="79.4,226.0 88.4,227.3 94.8,233.7 105.0,236.2 115.3,243.9 125.5,250.3 131.9,259.3 133.2,264.4 142.2,268.3 151.1,274.7 155.0,281.1 153.7,288.8"/>
<polyline points="0.0,246.0 12.8,249.1 23.1,255.5 38.4,258.0 51.2,261.9 58.9,267.0 74.3,269.5 84.5,274.7 97.3,279.8 107.6,282.9 120.4,284.4"/>
<polyline points="0.0,288.8 9.0,294.6 20.5,294.6 33.3,288.8 43.5,283.6 55.1,281.1 57.6,286.2 65.3,286.2 69.2,281.1 76.8,281.8 87.1,284.4 102.5,282.9 120.4,284.4 135.8,282.9 146.0,286.2 153.7,288.8 161.4,290.0 174.2,296.4 184.4,297.7 189.5,293.9 197.2,297.7 204.9,299.0 217.7,296.4 225.4,297.7 230.5,302.8 240.8,308.0 250.0,307.5"/>
<polyline points="51.2,261.9 55.1,267.0 64.0,268.3 76.8,272.1 87.1,275.9 97.3,281.1"/>
<polyline points="161.4,290.0 169.1,292.6 179.3,293.1 188.3,293.1"/>
<polyline points="120.4,284.4 115.3,290.0 112.7,300.3 105.0,310.5 92.2,314.4 79.4,320.8 64.0,327.2 51.2,336.1 38.4,345.1 28.2,354.1 15.4,358.7 0.0,359.2"/>
<polyline points="15.4,358.7 11.5,366.9 12.8,374.6 23.1,379.7 33.3,384.8 35.9,392.5 42.3,396.3 33.3,402.7 26.9,409.1 33.3,413.0 56.4,413.5 61.5,423.2 62.8,438.6 67.1,450.1"/>
<polyline points="120.4,423.7 116.5,423.2 114.0,416.8 116.5,414.3 133.2,411.7 153.7,413.0 166.5,414.3 179.3,416.8 199.8,418.1 212.6,411.7 230.5,410.9 250.0,411.7"/>
<polyline points="94.8,450.1 96.1,443.7 89.7,439.9 94.8,433.5 102.5,427.1 115.3,427.1 133.2,428.9 155.0,431.4"/>
<polyline points="149.8,438.1 161.4,439.9 169.1,434.8 179.3,429.6 194.7,428.4 212.6,428.9 224.1,430.9 217.7,438.6 220.3,446.3 225.4,450.1"/>
<polyline points="338.4,226.0 334.5,232.4 320.4,237.5 316.6,246.5 308.9,254.2 293.5,260.6 284.6,265.7 283.3,273.4 282.0,281.1 288.4,287.5 301.2,291.3 311.5,296.4 321.7,300.8 337.1,302.3 352.5,302.3 362.7,303.4 370.4,300.8"/>
<polyline points="250.0,306.7 260.2,313.1 269.2,308.0 278.2,304.1 288.4,304.1 298.7,308.0 301.2,313.1 311.5,314.4 321.7,309.2 329.4,308.0 337.1,313.1 347.3,314.4 357.6,315.7 364.0,309.2 370.4,302.8 380.6,304.1 388.3,308.0 398.6,307.5 408.8,311.8 419.1,316.9 428.0,319.5 426.7,325.9 431.9,333.6 439.5,343.8 447.2,352.8 452.4,359.2 462.6,365.6 475.4,369.4 488.2,373.3 500.0,374.6"/>
<polyline points="260.2,313.1 270.5,310.5 280.7,305.9 291.0,306.7 297.4,310.5"/>
<polyline points="321.7,309.2 326.8,311.8 334.5,314.4"/>
<polyline points="347.3,314.4 352.5,309.2 360.1,305.9 370.4,302.8"/>
<polyline points="419.1,316.9 417.8,323.3 424.2,325.9 434.4,338.7 444.7,351.5 448.5,361.8 457.5,366.9 467.7,373.3 480.5,374.6 490.8,377.1 500.0,376.6"/>
<polyline points="462.6,365.6 467.7,374.6 467.7,384.8 462.6,395.1 465.2,405.3 458.8,415.5 467.7,419.4 475.4,423.2 478.0,430.9 476.7,438.6 480.5,445.0 489.5,446.3 490.8,450.1"/>
<polyline points="250.0,411.7 262.8,413.0 275.6,414.3 282.8,417.6"/>
<polyline points="319.7,408.4 317.9,414.3 314.0,416.1 326.8,416.8 347.3,420.7 365.3,428.4 383.2,433.5 393.4,439.9 403.7,443.7 419.1,445.0 434.4,447.6 442.1,448.8"/>
<polyline points="507.7,226.0 515.4,233.7 523.1,241.4 533.3,247.8 546.1,251.6 553.8,261.9 566.6,269.5 579.4,275.9 589.7,282.4 599.9,290.0 605.0,295.2 615.3,296.4"/>
<polyline points="750.0,250.3 735.7,252.9 725.4,255.5 712.6,251.6 699.8,250.3 684.4,252.9 669.1,256.7 653.7,258.0 643.4,261.9 633.2,268.3 625.5,273.4 620.4,281.1 623.0,290.0 615.3,296.4 612.7,302.8 607.6,310.5 605.0,320.8 602.5,331.0 607.6,338.7 612.7,346.4 615.3,359.2 617.8,369.4 620.4,379.7 617.8,387.4 614.0,392.5"/>
<polyline points="750.0,254.2 730.5,256.2 715.2,255.5 694.7,254.2 676.7,258.0 658.8,260.6 643.4,265.7 633.2,274.7 625.5,283.6 625.5,292.6 617.8,302.8 614.0,313.1 612.7,323.3 615.3,333.6 623.0,341.3 626.8,349.0 625.5,359.2 628.1,369.4 630.6,379.7 629.4,387.4 623.0,392.5"/>
<polyline points="721.6,226.0 717.7,233.7 715.2,241.4 710.0,246.5 699.8,249.1"/>
<polyline points="612.7,331.0 620.4,333.6 625.5,338.7 620.4,342.5 612.7,338.7"/>
<polyline points="625.5,372.0 630.6,370.7 633.2,378.4 629.4,382.2 625.5,378.4 625.5,372.0"/>
<polyline points="615.3,310.5 625.5,320.8 630.6,328.5 643.4,334.9 658.8,337.4 671.6,336.7 684.4,341.3 694.7,349.0 702.4,359.2 712.6,365.6 712.6,374.6 702.4,377.1 704.9,384.8 712.6,389.9 710.0,400.2 704.9,407.9 703.6,418.1 708.8,422.0"/>
<polyline points="500.0,373.3 507.7,372.0 515.4,375.8 525.6,375.8 533.3,373.3 546.1,374.6 553.8,369.4 566.6,368.9 576.8,370.7 579.4,377.1 589.7,382.2 602.5,386.1 612.7,389.9 616.5,395.1"/>
<polyline points="517.9,381.0 530.7,384.8 543.5,386.1 551.2,392.5 564.0,396.3 569.2,400.2"/>
<polyline points="505.1,402.7 515.4,397.6 525.6,398.9 530.7,405.3 528.2,415.5 523.1,425.8 530.7,430.9 541.0,433.5 548.7,438.6 553.8,446.3 564.0,448.8 576.8,447.6 589.7,450.1"/>
<polyline points="505.1,402.7 502.6,410.4 507.7,416.8 511.5,414.3"/>
<polyline points="569.2,405.3 576.8,410.4 587.1,415.5 594.8,423.2 599.9,428.4 597.3,438.6 602.5,446.3 599.9,451.4"/>
<polyline points="602.5,425.8 610.1,430.9 612.7,438.6 620.4,443.7 628.1,448.8"/>
<polyline points="633.2,384.8 643.4,392.5 653.7,402.7 663.9,405.3 674.2,410.4 684.4,413.0 697.2,416.8"/>
<polyline points="667.8,389.9 676.7,386.9 683.1,388.7 683.1,400.2 684.4,410.4"/>
<polyline points="669.1,389.9 667.8,397.6 674.2,402.7 673.7,409.9"/>
<polyline points="684.4,402.7 694.7,400.2 702.4,405.3 704.9,413.0"/>
<polyline points="750.0,392.5 740.8,393.8 730.5,397.6 722.8,400.2 725.4,407.9 720.3,415.5 712.6,416.8"/>
<polyline points="750.0,400.2 738.2,405.3 735.7,413.0 725.4,416.8"/>
<polyline points="750.0,372.0 748.0,374.6 750.0,377.1"/>
<polyline points="658.8,425.8 657.5,430.9 666.5,434.8 679.3,433.5 694.7,437.3 699.8,441.2 697.2,448.8"/>
<polyline points="663.9,441.2 676.7,438.6 684.4,443.7 679.3,450.1"/>
<polyline points="648.6,436.0 653.7,441.2 651.1,448.8"/>
</g>
<g fill="none" stroke="#e6ff30" stroke-width="1.1" stroke-linejoin="round" shape-rendering="crispEdges">
<polyline points="0.0,64.0 10.2,67.1 20.5,64.0 28.2,57.6 33.3,52.5 41.0,51.2 46.1,53.8 54.3,53.8 55.1,64.0 57.6,71.7 56.4,79.4 61.5,83.2 74.3,84.5 76.8,88.4 87.1,89.7 101.2,91.7 110.1,96.8 123.0,98.6 140.9,97.3 148.6,93.5 153.2,96.1 153.7,102.5 151.1,107.6 155.0,112.7 166.5,117.3 176.7,119.1 184.4,117.8 199.8,121.7 217.7,124.2 228.0,126.8 233.1,133.2 234.4,139.6 240.8,142.2 250.0,142.2"/>
<polyline points="0.0,169.1 10.2,172.1 23.1,176.7 25.6,171.6 35.9,171.1 46.1,169.1 53.8,167.0 61.5,171.1 74.3,174.2 87.1,176.7 102.5,179.3 106.3,184.4 106.3,190.8 102.5,197.2 112.7,199.8 128.1,202.4 138.3,204.9 153.7,208.8 157.5,213.9 169.1,217.2 179.3,215.2 189.5,212.6 202.4,210.6 210.0,215.2 212.6,222.8 217.7,225.9"/>
<polyline points="250.0,131.9 257.7,129.4 261.5,133.2 262.8,139.6 275.6,142.2 291.0,140.9 292.3,135.8 296.1,133.2 308.9,131.4 316.6,134.5 326.8,138.3 337.1,140.9 352.5,144.7 356.3,148.6 362.7,151.1 370.4,149.8 379.4,147.3 388.3,148.6 403.7,149.8 416.5,151.1 429.3,149.8 437.0,146.0 444.7,144.0 452.4,144.7"/>
<polyline points="452.4,144.7 454.9,140.9 467.7,139.6 480.5,138.3 493.3,134.5 500.0,131.9"/>
<polyline points="452.4,144.7 457.5,148.6 454.9,156.2 449.8,163.9 444.7,171.6 442.1,179.3 446.0,187.0 442.1,193.4 447.2,199.8 454.9,204.9 458.8,212.6 460.0,225.9"/>
<polyline points="500.0,130.6 510.2,131.9 520.5,135.8 525.6,143.4 526.9,148.6 521.8,158.8 516.6,166.5 519.2,174.2 525.6,179.3 533.3,180.6 530.7,184.4 517.9,188.3 516.6,192.1 523.1,194.7 528.2,202.4 538.4,204.9 551.2,210.0 566.6,212.6 576.8,210.6 587.1,212.6 602.5,217.7 615.3,220.3 628.1,219.0 643.4,215.2 658.8,212.6 674.2,208.0 689.5,210.0 704.9,213.1 720.3,213.9 735.7,212.6 750.0,211.3"/>
<polyline points="533.3,180.6 538.4,171.6 551.2,163.9 558.9,153.7 569.2,147.3 579.4,139.6 587.1,133.2 597.3,128.1 610.1,125.5 620.4,120.4 628.1,117.8 638.3,116.5 653.7,117.8 669.1,119.1 676.7,121.7 676.2,126.8 674.2,130.6 684.4,131.9 699.8,131.1 707.5,130.1 717.7,131.9 730.5,133.2 740.8,135.8 750.0,139.6"/>
<polyline points="217.7,226.0 222.8,229.1 230.5,228.0 234.4,226.0"/>
<polyline points="250.0,227.3 262.8,228.6 280.7,231.1 301.2,235.0 319.2,238.8 332.0,235.0 339.7,231.1 346.1,229.8 348.6,236.2 357.6,240.1 370.4,240.1 375.5,243.9 383.2,238.8 396.0,241.4 408.8,238.8 419.1,237.5 429.3,237.5 439.5,242.6 447.2,237.5 452.4,231.1 454.9,226.0"/>
<polyline points="500.0,237.5 490.8,236.2 480.5,233.7 475.4,236.2 480.5,240.1 493.3,241.4 478.0,246.5 475.4,251.6 462.6,254.2 457.5,261.9 452.4,267.0 451.1,273.4 454.9,278.5 467.7,278.5 480.5,284.9 490.8,287.5 493.3,293.9 500.0,297.7"/>
<polyline points="500.0,316.9 489.5,318.2 485.7,328.5 475.4,338.7 467.7,334.9 457.5,336.1 453.6,341.3 447.2,350.2 452.4,359.2 467.7,365.6 485.7,370.7 500.0,373.3"/>
<polyline points="500.0,236.2 507.7,238.8 512.8,245.2 509.0,247.8"/>
<polyline points="533.3,238.8 541.0,237.5 553.8,243.9 546.1,250.3 535.9,246.5 532.0,242.6 533.3,238.8"/>
<polyline points="551.2,246.5 556.4,254.2 566.6,259.3 576.8,264.4 587.1,264.4 597.3,267.0 602.5,259.3 601.2,254.2 607.6,250.3 612.7,254.2 620.4,260.6 626.8,267.0 628.1,270.8 624.2,277.2 626.8,284.9 630.6,290.0 625.5,299.0 626.8,305.4 633.2,310.5 648.6,313.1 663.9,315.1 679.3,316.9 694.7,316.2 710.0,316.9 725.4,315.7 750.0,315.1"/>
<polyline points="500.0,299.0 510.2,297.7 523.1,299.0 526.9,305.4 535.9,309.2 543.5,311.8 538.4,316.9 525.6,318.2 510.2,317.7 500.0,319.5"/>
<polyline points="500.0,374.6 510.2,375.8 516.6,379.7 519.2,392.5 515.4,400.2 505.1,404.0 502.6,413.0 507.7,420.7 520.5,425.8 524.3,430.9 517.9,438.6 515.4,443.7 525.6,443.7 538.4,445.0 544.8,446.3"/>
<polyline points="250.0,142.2 248.5,138.0 250.0,131.9"/>
<polyline points="234.4,226.0 241.0,224.5 250.0,227.3"/>
<polyline points="459.5,224.0 458.5,227.5 455.0,226.3"/>
</g>
<g fill="none" stroke="#000" stroke-width="1.2" stroke-dasharray="1.2 3.8">
<path d="M0,7.5 Q389,11.5 749,7.5"/>
<path d="M0,71.5 Q389,75.5 749,71.5"/>
<path d="M0,135.5 Q389,139.5 749,135.5"/>
<path d="M0,199.5 Q389,203.5 749,199.5"/>
<path d="M0,263.5 Q389,267.5 749,263.5"/>
<path d="M0,327.5 Q389,331.5 749,327.5"/>
<path d="M0,391.5 Q389,395.5 749,391.5"/>
<path d="M0,455.5 Q389,459.5 749,455.5"/>
<line x1="46.2" y1="0" x2="26.9" y2="451"/>
<line x1="144.2" y1="0" x2="130.5" y2="451"/>
<line x1="242.4" y1="0" x2="234.1" y2="451"/>
<line x1="340.4" y1="0" x2="337.7" y2="451"/>
<line x1="438.6" y1="0" x2="441.3" y2="451"/>
<line x1="536.6" y1="0" x2="544.9" y2="451"/>
<line x1="634.8" y1="0" x2="648.5" y2="451"/>
<line x1="732.8" y1="0" x2="752.1" y2="451"/>
</g>
<g font-family="Liberation Sans, sans-serif" font-size="16.5" fill="#000" text-anchor="middle">
<text x="340.4" y="11">30</text>
<text x="340.0" y="75">29</text>
<text x="339.6" y="139">28</text>
<text x="339.2" y="203">27</text>
<text x="338.8" y="267">26</text>
<text x="338.4" y="331">25</text>
<text x="338.0" y="395">24</text>
<text x="37.6" y="203">84</text>
<text x="138.1" y="203">85</text>
<text x="238.7" y="203">86</text>
<text x="339.2" y="203">87</text>
<text x="439.8" y="203">88</text>
<text x="540.3" y="203">89</text>
<text x="640.9" y="203">90</text>
<text x="741.4" y="203">91</text>
</g>
<g fill="none" stroke="#ffe800" stroke-width="2.6">
<path d="M452,128.8 L456.6,134 L452,139.2 L447.4,134 Z" stroke-linejoin="round"/>
<path d="M483,124.8 L487.6,130 L483,135.2 L478.4,130 Z" stroke-linejoin="round"/>
<path d="M467,168.8 L471.6,174 L467,179.2 L462.4,174 Z" stroke-linejoin="round"/>
<path d="M499,164.8 L503.6,170 L499,175.2 L494.4,170 Z" stroke-linejoin="round"/>
<path d="M482,208.8 L486.6,214 L482,219.2 L477.4,214 Z" stroke-linejoin="round"/>
<path d="M513,205.8 L517.6,211 L513,216.2 L508.4,211 Z" stroke-linejoin="round"/>
<path d="M496,247.8 L500.6,253 L496,258.2 L491.4,253 Z" stroke-linejoin="round"/>
<path d="M527,245.8 L531.6,251 L527,256.2 L522.4,251 Z" stroke-linejoin="round"/>
<path d="M510,289.8 L514.6,295 L510,300.2 L505.4,295 Z" stroke-linejoin="round"/>
<path d="M541,285.8 L545.6,291 L541,296.2 L536.4,291 Z" stroke-linejoin="round"/>
</g>
<g fill="#ffe800" stroke="none">
<rect x="466.8" y="131.3" width="1.5" height="1.5"/>
<rect x="482.3" y="171.3" width="1.5" height="1.5"/>
<rect x="496.8" y="211.8" width="1.5" height="1.5"/>
<rect x="510.8" y="251.3" width="1.5" height="1.5"/>
<rect x="524.8" y="292.3" width="1.5" height="1.5"/>
</g>
<g fill="none" stroke="#20ff30" stroke-width="2.2">
<path d="M483,223 H511 M497,209 V237 M484,237 L510,209 M484,209 L510,237"/>
</g>
<g fill="none" stroke="#ff0000" stroke-width="1.6">
<path d="M209.5,160 H218.5 M214,155.5 V164.5"/>
<path d="M223.5,201 H232.5 M228,196.5 V205.5"/>
<path d="M237.5,240 H246.5 M242,235.5 V244.5"/>
<path d="M251.5,282 H260.5 M256,277.5 V286.5"/>
<path d="M265.5,322 H274.5 M270,317.5 V326.5"/>
</g>
</svg>
</div>
</body></html>
